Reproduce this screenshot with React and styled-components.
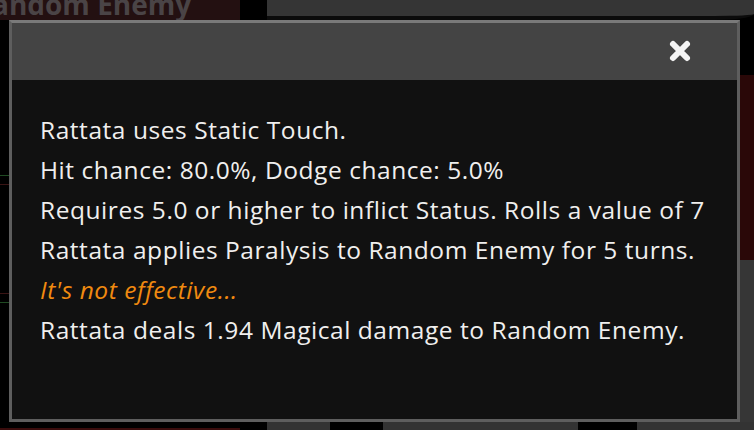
import React from "react";
import styled, { createGlobalStyle } from "styled-components";

const Global = createGlobalStyle`
  html, body { margin: 0; padding: 0; background: #000; overflow: hidden; }
  #root { width: 754px; height: 430px; }
`;

const Screen = styled.div`
  width: 754px;
  height: 430px;
  display: flex;
  flex-direction: column;
  background: #000;
  font-family: "Open Sans", "Noto Sans", sans-serif;
  overflow: hidden;
`;

const TopStrip = styled.div`
  height: 20px;
  display: flex;
  flex-shrink: 0;
`;

const EnemyTag = styled.div`
  width: 240px;
  height: 20px;
  background: #231011;
  color: #4a4446;
  font-weight: 700;
  font-size: 28px;
  line-height: 20px;
  overflow: hidden;
  white-space: nowrap;
  display: flex;
  align-items: flex-end;
  span { display: block; transform: translate(-8px, -6px); }
`;

const Gap = styled.div`
  width: ${p => p.w}px;
  background: #000;
`;

const GreyPanel = styled.div`
  flex: 1;
  background: #353535;
  border-bottom: 4px solid #0b0b0b;
  border-bottom-right-radius: 40px 6px;
`;

const Middle = styled.div`
  flex: 1;
  display: flex;
  min-height: 0;
`;

const LeftEdge = styled.div`
  width: 9px;
  display: flex;
  flex-direction: column;
  padding-top: 155px;
  gap: 8px;
`;

const Tick = styled.div`
  height: 1px;
  width: 9px;
  background: ${p => p.c};
  margin-top: ${p => p.m || 0}px;
`;

const RightEdge = styled.div`
  width: 14px;
  display: flex;
  flex-direction: column;
`;

const EdgeBlock = styled.div`
  height: ${p => p.h}px;
  background: ${p => p.bg};
  flex: ${p => (p.grow ? 1 : "none")};
`;

const Dialog = styled.div`
  width: 731px;
  box-sizing: border-box;
  display: flex;
  flex-direction: column;
  background: #111111;
  border: 3px solid #5e5e5e;
  border-top-color: #7a7a7a;
`;

const Header = styled.div`
  height: 57px;
  background: #444444;
  display: flex;
  align-items: center;
  justify-content: flex-end;
  padding-right: 44px;
  flex-shrink: 0;
`;

const CloseButton = styled.div`
  width: 26px;
  height: 24px;
  display: flex;
  align-items: center;
  justify-content: center;
  margin-top: -2px;
`;

const Body = styled.div`
  flex: 1;
  padding: 30px 0 0 28px;
  display: flex;
  flex-direction: column;
`;

const Line = styled.div`
  font-size: 24.5px;
  font-weight: 500;
  letter-spacing: 0.55px;
  line-height: 40px;
  color: ${p => (p.warn ? "#f08a10" : "#f0efee")};
  font-style: ${p => (p.warn ? "italic" : "normal")};
  white-space: nowrap;
`;

const BottomStrip = styled.div`
  height: 8px;
  display: flex;
  flex-shrink: 0;
`;

const BottomBlock = styled.div`
  width: ${p => (p.w ? p.w + "px" : "auto")};
  flex: ${p => (p.w ? "none" : 1)};
  background: ${p => p.bg};
  border-bottom: ${p => (p.line ? "2px solid #3a0c0c" : "none")};
  box-sizing: border-box;
`;

const lines = [
  "Rattata uses Static Touch.",
  "Hit chance: 80.0%, Dodge chance: 5.0%",
  "Requires 5.0 or higher to inflict Status. Rolls a value of 7",
  "Rattata applies Paralysis to Random Enemy for 5 turns.",
];

export default function App() {
  return (
    <>
      <Global />
      <Screen>
        <TopStrip>
          <EnemyTag><span>andom Enemy</span></EnemyTag>
          <Gap w={27} />
          <GreyPanel />
        </TopStrip>
        <Middle>
          <LeftEdge>
            <Tick c="#1f4a22" />
            <Tick c="#3a1414" />
            <Tick c="#3a1414" m={100} />
            <Tick c="#1f4a22" />
          </LeftEdge>
          <Dialog>
            <Header>
              <CloseButton>
                <svg width="26" height="24" viewBox="0 0 26 24">
                  <path d="M6 5 L20 19 M20 5 L6 19" stroke="#f4f4f4" strokeWidth="6" strokeLinecap="round" />
                </svg>
              </CloseButton>
            </Header>
            <Body>
              {lines.map(t => <Line key={t}>{t}</Line>)}
              <Line warn>It's not effective...</Line>
              <Line>Rattata deals 1.94 Magical damage to Random Enemy.</Line>
            </Body>
          </Dialog>
          <RightEdge>
            <EdgeBlock h={55} bg="#000" />
            <EdgeBlock h={185} bg="#2a0808" />
            <EdgeBlock grow bg="#363636" />
          </RightEdge>
        </Middle>
        <BottomStrip>
          <BottomBlock w={240} bg="#000" line />
          <BottomBlock w={27} bg="#000" />
          <BottomBlock w={63} bg="#333" />
          <BottomBlock w={53} bg="#000" />
          <BottomBlock w={195} bg="#333" />
          <BottomBlock w={59} bg="#000" />
          <BottomBlock bg="#333" />
        </BottomStrip>
      </Screen>
    </>
  );
}
